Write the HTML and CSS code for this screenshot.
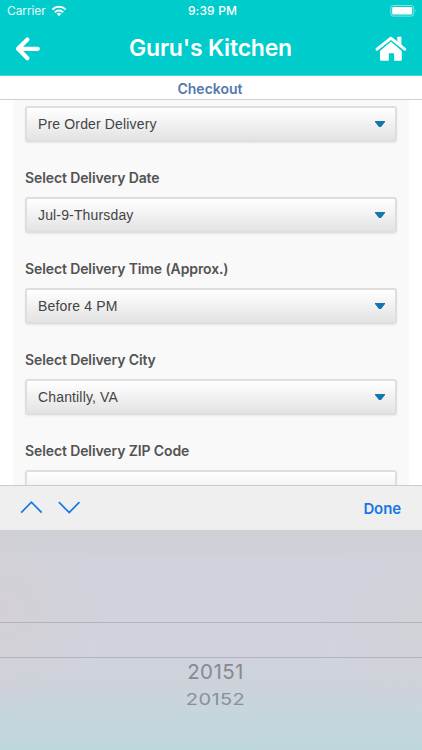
FILE: index.html
```html
<!DOCTYPE html>
<html lang="en">
<head>
<meta charset="utf-8">
<title>Guru's Kitchen</title>
<link rel="stylesheet" href="styles.css">
</head>
<body>
<div class="screen">
  <header class="header">
    <div class="status">
      <div class="status-left">
        <span class="carrier">Carrier</span>
        <svg class="wifi" width="16" height="12" viewBox="0 0 16 12" fill="none" stroke="#fff" stroke-width="2">
          <path d="M1.4 4.5A9.4 9.4 0 0 1 14.6 4.5"/>
          <path d="M3.9 7.2A5.8 5.8 0 0 1 12.1 7.2"/>
          <path d="M8 11.2L5.7 8.8A3.3 3.3 0 0 1 10.3 8.8Z" fill="#fff" stroke="none"/>
        </svg>
      </div>
      <span class="clock">9:39 PM</span>
      <svg class="battery" width="27" height="12" viewBox="0 0 27 12">
        <rect x=".8" y=".5" width="23" height="10.6" rx="2.5" fill="none" stroke="#fff" stroke-opacity=".5"/>
        <rect x="2.2" y="2" width="20" height="7.6" rx="1.1" fill="#fff"/>
        <path d="M25.1 4.2q1.5 1.6 0 3.2z" fill="#fff" fill-opacity=".5"/>
      </svg>
    </div>
    <div class="nav">
      <svg class="back" width="27" height="26" viewBox="0 0 27 26" fill="none" stroke="#fff" stroke-width="4.2" stroke-linecap="round" stroke-linejoin="round">
        <path d="M13.4 3.4L4 12.8L13.4 22.2M4.4 12.8H23.8" />
      </svg>
      <h1 class="title">Guru's Kitchen</h1>
      <svg class="home" width="32" height="26" viewBox="0 0 32 26">
        <path d="M5 15L15.9 5.6L26.8 15V23.4Q26.8 24.7 25.5 24.7H19.1V17.3H13.8V24.7H6.3Q5 24.7 5 23.4Z" fill="#fff"/>
        <path d="M2.1 13.2L15.9 2.2L29.7 13.2" fill="none" stroke="#00cccb" stroke-width="4.8"/>
        <path d="M22.3 .8H26.4V10.5L22.3 7.3Z" fill="#fff"/>
        <path d="M2.1 13.2L15.9 2.2L29.7 13.2" fill="none" stroke="#fff" stroke-width="3" stroke-linecap="round" stroke-linejoin="round"/>
      </svg>
    </div>
  </header>
  <div class="subhead"><span>Checkout</span></div>
  <main class="content">
    <form class="panel">
      <div class="select"><span>Pre Order Delivery</span><i class="caret"></i></div>
      <label class="label"><span>Select Delivery Date</span></label>
      <div class="select"><span>Jul-9-Thursday</span><i class="caret"></i></div>
      <label class="label"><span>Select Delivery Time (Approx.)</span></label>
      <div class="select"><span>Before 4 PM</span><i class="caret"></i></div>
      <label class="label"><span>Select Delivery City</span></label>
      <div class="select"><span>Chantilly, VA</span><i class="caret"></i></div>
      <label class="label"><span>Select Delivery ZIP Code</span></label>
      <div class="select"></div>
    </form>
  </main>
  <div class="toolbar">
    <svg width="60" height="16" viewBox="0 0 60 16" fill="none" stroke="#1877e6" stroke-width="1.7">
      <path d="M1.2 12.6L11.4 2.2L21.7 12.6M38.9 2.2L49.2 12.6L59.4 2.2"/>
    </svg>
    <span class="done">Done</span>
  </div>
  <div class="picker">
    <div class="band"></div>
    <div class="option first"><span>20151</span></div>
    <div class="option second"><span>20152</span></div>
  </div>
</div>
</body>
</html>
```
FILE: styles.css
```css
* { box-sizing: border-box; }
body { margin: 0; font-family: Inter, "Liberation Sans", sans-serif; }
.screen { width: 422px; height: 750px; overflow: hidden; display: flex; flex-direction: column; background: #fff; }
.header { height: 76px; flex: none; background: #00cccb; border-bottom: 1px solid #40d9d8; color: #fff; }
.status { height: 22px; display: grid; grid-template-columns: 1fr auto 1fr; align-items: center; padding: 0 5px 0 7px; font-size: 12px; line-height: 22px; }
.status-left { display: flex; align-items: center; gap: 5px; }
.carrier { opacity: .93; letter-spacing: -.1px; }
.wifi { margin-top: -1px; }
.clock { font-weight: 500; letter-spacing: .15px; padding-left: 1px; }
.battery { justify-self: end; margin-top: -1px; }
.nav { height: 53px; display: grid; grid-template-columns: 40px 1fr 40px; align-items: center; padding: 0 15px 0 14px; }
.title { margin: 0; font-size: 23px; line-height: 48px; padding-bottom: 2px; font-weight: 600; letter-spacing: -.2px; text-align: center; white-space: nowrap; }
.home { justify-self: end; }
.subhead { height: 24px; flex: none; border-bottom: 1px solid #cfcfcf; text-align: center; font-size: 14px; line-height: 26px; font-weight: 600; color: #5478ac; padding-right: 2px; }
.content { height: 385px; flex: none; overflow: hidden; padding: 0 13px; }
.panel { margin: 0; padding: 6px 12px 0; background: #f9f9f9; }
.select { height: 36px; display: flex; align-items: center; justify-content: space-between; padding: 0 10px 0 11px; border: 2px solid #dedede; border-radius: 3px; background: linear-gradient(#fff, #e3e3e3); background-clip: padding-box; box-shadow: 0 1px 2px rgba(0,0,0,.08); color: #444; font: 14px/32px "Liberation Sans", sans-serif; letter-spacing: .15px; }
.caret { width: 10px; height: 6px; background: #1178ad; clip-path: polygon(0 0, 100% 0, 100% 17%, 60% 100%, 40% 100%, 0 17%); }
.label { height: 55px; display: flex; align-items: center; padding-top: 17px; font-size: 14px; line-height: 18px; font-weight: 600; letter-spacing: -.11px; color: #535353; }
.toolbar { height: 45px; flex: none; display: flex; align-items: center; justify-content: space-between; padding: 0 21px 0 20px; border-top: 1px solid #cbcccd; background: #efeff0; }
.done { font-size: 15px; font-weight: 600; letter-spacing: -.1px; color: #1877e6; }
.picker { height: 220px; flex: none; padding-top: 92px; background: radial-gradient(110px 100px at 0 80px, rgba(213,207,210,.7), rgba(211,209,213,0)), radial-gradient(110px 100px at 100% 90px, rgba(211,209,213,.6), rgba(211,209,213,0)), linear-gradient(#ced0d5 0, #d0d2dc 30px, #d0d3dd 128px, #cdd2da 155px, #c7d5dc 180px, #bdd8dd 220px); }
.band { height: 36px; border: solid #b4b5bd; border-width: 1px 0; }
.option { display: flex; justify-content: center; color: #858a91; padding-left: 9px; }
.first { height: 29px; font-size: 20.5px; line-height: 28px; letter-spacing: .4px; }
.second { height: 25px; font-size: 20px; line-height: 25px; letter-spacing: .4px; color: #899098; }
.second span { transform: scaleY(.8); }
```
